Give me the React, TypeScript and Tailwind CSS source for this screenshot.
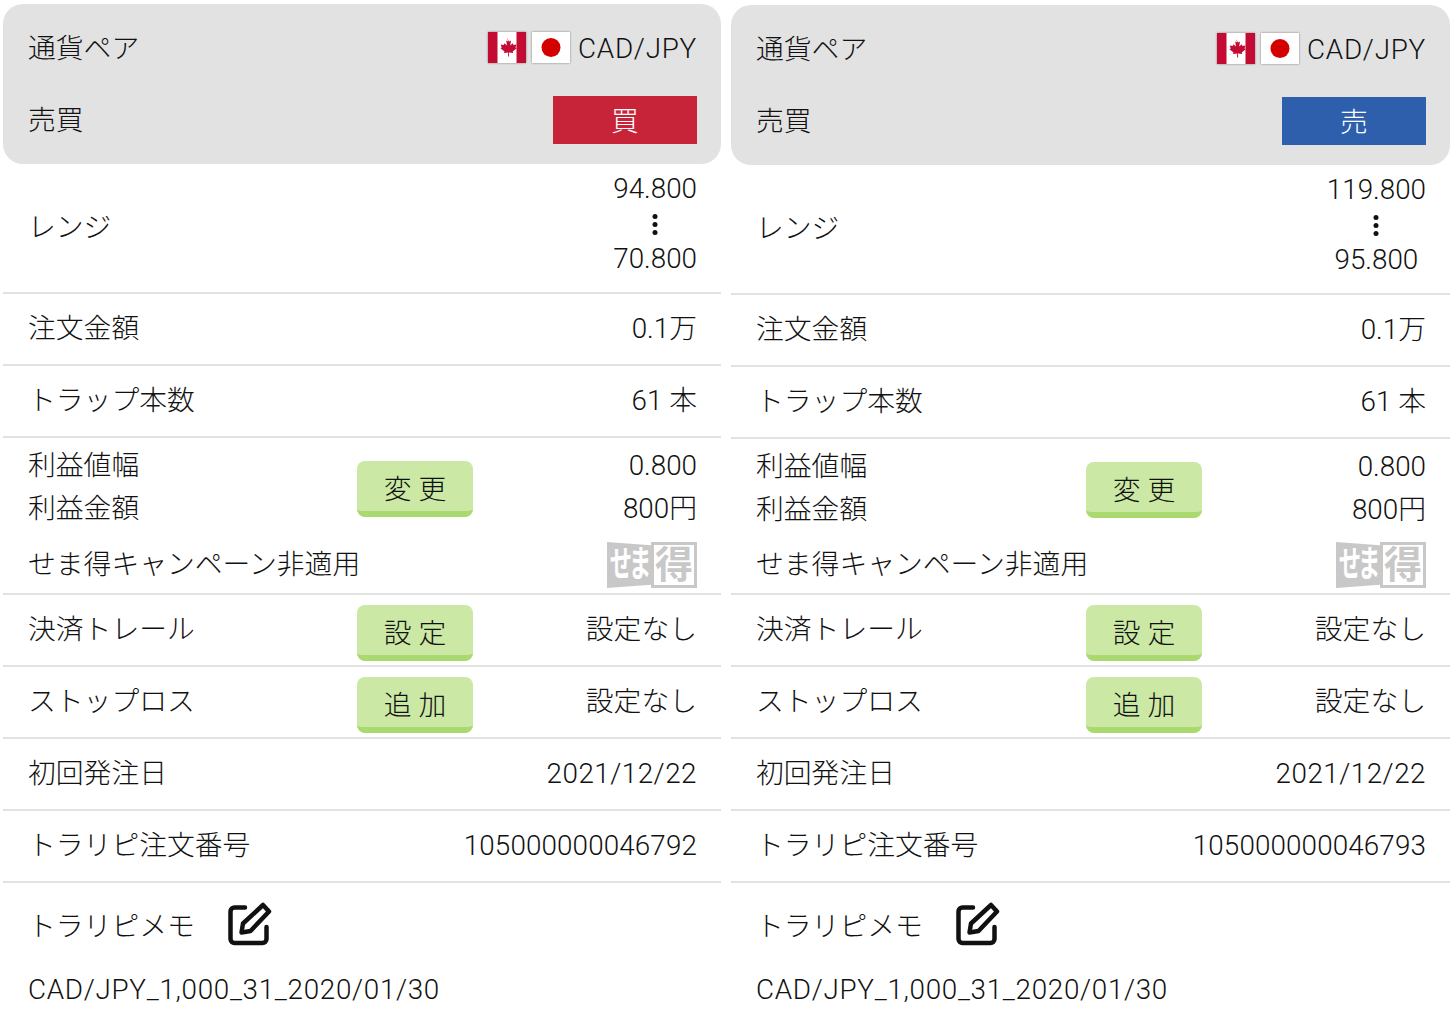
import { ReactNode } from "react";

const FONT = "font-['Roboto','Noto_Sans_CJK_JP','Noto_Sans',sans-serif]";

function CanadaFlag() {
  return (
    <svg viewBox="0 0 38 31" className="h-[31px] w-[38px] shadow-[0_0_2px_rgba(0,0,0,0.45)]">
      <rect width="38" height="31" fill="#fff" />
      <rect width="9.5" height="31" fill="#c30b33" />
      <rect x="28.5" width="9.5" height="31" fill="#c30b33" />
      <path
        d="M19 6l2 3.5 2-1-.8 5 2.6-2.2.7 1.7 3-.5-1 3 1.2.7-4 3.3.6 1.6-4.3-.6.1 4h-1l.1-4-4.3.6.6-1.6-4-3.3 1.2-.7-1-3 3 .5.7-1.700 2.600 2.200-.8-5 2 1z"
        fill="#c30b33"
      />
    </svg>
  );
}

function JapanFlag() {
  return (
    <svg viewBox="0 0 38 31" className="h-[31px] w-[38px] shadow-[0_0_2px_rgba(0,0,0,0.45)]">
      <rect width="38" height="31" fill="#fff" />
      <circle cx="19" cy="15.5" r="9.5" fill="#d40000" />
    </svg>
  );
}

function EditIcon() {
  return (
    <svg viewBox="0 0 44 44" className="h-[44px] w-[44px]" fill="none" stroke="#111" strokeWidth="4.5" strokeLinecap="round" strokeLinejoin="round">
      <path d="M17 5.500H6.500a4 4 0 0 0-4 4V37a4 4 0 0 0 4 4h28a4 4 0 0 0 4-4V25" />
      <path d="M35 3l6 6.500-18.500 19.500-9 1.500 1.500-9z" />
    </svg>
  );
}

function SemaTokuBadge() {
  return (
    <div className="flex h-[46px] w-[90px] items-stretch font-bold leading-none text-[#c8c8c8]">
      <div className="flex w-[44px] items-center justify-center overflow-hidden bg-[#c8c8c8] text-[36px] text-white [clip-path:polygon(0_0,100%_7%,100%_93%,0_100%)]">
        <span className="inline-block scale-x-[0.62] whitespace-nowrap tracking-[-5px]">せま</span>
      </div>
      <div className="flex flex-1 items-center justify-center border-[3px] border-[#c8c8c8] text-[38px]">得</div>
    </div>
  );
}

function GreenButton({ text }: { text: string }) {
  return (
    <div className="flex h-[56px] w-[116px] shrink-0 items-center justify-center rounded-[8px] border-b-[6px] border-[#a9d96f] bg-[#cbe8a5] pt-[7px]">
      {text}
    </div>
  );
}

function Row({ label, children, button, valueClass, labelWidth }: { label: ReactNode; children: ReactNode; button?: string; valueClass?: string; labelWidth: string }) {
  return (
    <div className="box-content flex h-[70px] items-center border-b-2 border-[#e2e2e2] pl-[25px] pr-[24px]">
      <div className={`shrink-0 ${labelWidth}`}>{label}</div>
      {button ? <div className="mt-[6px]"><GreenButton text={button} /></div> : null}
      <div className={`flex-1 text-right ${valueClass ?? ""}`}>{children}</div>
    </div>
  );
}

function Panel({ side, sideBg, range, number, className, labelWidth, profitHeight, badgeGap }: { side: string; sideBg: string; range: [string, string]; number: string; className: string; labelWidth: string; profitHeight: string; badgeGap: string }) {
  return (
    <div className={className}>
      <div className="flex h-[160px] flex-col rounded-[20px] bg-[#e2e2e2] pl-[25px] pr-[24px] pt-[20px]">
        <div className="flex h-[46px] items-center justify-between">
          <span className="pt-[4px]">通貨ペア</span>
          <div className="flex items-center gap-[6px]">
            <CanadaFlag />
            <JapanFlag />
            <span className="ml-[2px] pt-[4px] tracking-[0.75px]">CAD/JPY</span>
          </div>
        </div>
        <div className="mt-[26px] flex h-[48px] items-center justify-between">
          <span className="pt-[2px]">売買</span>
          <div className={`flex h-[48px] w-[144px] items-center justify-center pt-[3px] text-white ${sideBg}`}>{side}</div>
        </div>
      </div>

      <div className="box-content flex h-[128px] items-center justify-between border-b-2 border-[#e2e2e2] pl-[25px] pr-[24px]">
        <span>レンジ</span>
        <div className="flex flex-col items-center pb-[10px] text-center leading-[35px]">
          <span>{range[0]}</span>
          <svg viewBox="0 0 6 22" className="mb-[5px] mt-[7px] h-[23px] w-[6px]" fill="#111">
            <circle cx="3" cy="3" r="2.500" />
            <circle cx="3" cy="11" r="2.500" />
            <circle cx="3" cy="19" r="2.500" />
          </svg>
          <span>{range[1]}</span>
        </div>
      </div>
      <Row labelWidth={labelWidth} label="注文金額">0.1万</Row>
      <Row labelWidth={labelWidth} label="トラップ本数">61 本</Row>

      <div className={`box-content flex flex-col border-b-2 border-[#e2e2e2] pl-[25px] pr-[24px] pt-[6px] ${profitHeight}`}>
        <div className="flex items-center">
          <div className={`shrink-0 leading-[43px] ${labelWidth}`}>
            <div>利益値幅</div>
            <div>利益金額</div>
          </div>
          <div className="mt-[4px]"><GreenButton text="変 更" /></div>
          <div className="flex-1 text-right leading-[43px]">
            <div>0.800</div>
            <div>800円</div>
          </div>
        </div>
        <div className={`flex items-center justify-between ${badgeGap}`}>
          <span>せま得キャンペーン非適用</span>
          <SemaTokuBadge />
        </div>
      </div>

      <Row labelWidth={labelWidth} label="決済トレール" button="設 定">設定なし</Row>
      <Row labelWidth={labelWidth} label="ストップロス" button="追 加">設定なし</Row>
      <Row labelWidth={labelWidth} label="初回発注日" valueClass="tracking-[0.5px]">2021/12/22</Row>
      <Row labelWidth={labelWidth} label="トラリピ注文番号" valueClass="tracking-[0.13px]">{number}</Row>

      <div className="pl-[25px] pt-[17px]">
        <div className="flex items-center gap-[33px]">
          <span className="pt-[6px]">トラリピメモ</span>
          <EditIcon />
        </div>
        <div className="mt-[21px] tracking-[0.7px]">CAD/JPY_1,000_31_2020/01/30</div>
      </div>
    </div>
  );
}

export default function App() {
  return (
    <div className={`${FONT} flex h-[1024px] w-[1454px] gap-[10px] overflow-hidden bg-white pl-[3px] text-[27.8px] font-light text-[#111]`}>
      <Panel className="mt-[4px] w-[718px]" labelWidth="w-[329px]" profitHeight="h-[149px]" badgeGap="mt-[12px]" side="買" sideBg="bg-[#c82439]" range={["94.800", "70.800"]} number="105000000046792" />
      <Panel className="mt-[5px] w-[719px]" labelWidth="w-[330px]" profitHeight="h-[148px]" badgeGap="mt-[11px]" side="売" sideBg="bg-[#2d5fad]" range={["119.800", "95.800"]} number="105000000046793" />
    </div>
  );
}
